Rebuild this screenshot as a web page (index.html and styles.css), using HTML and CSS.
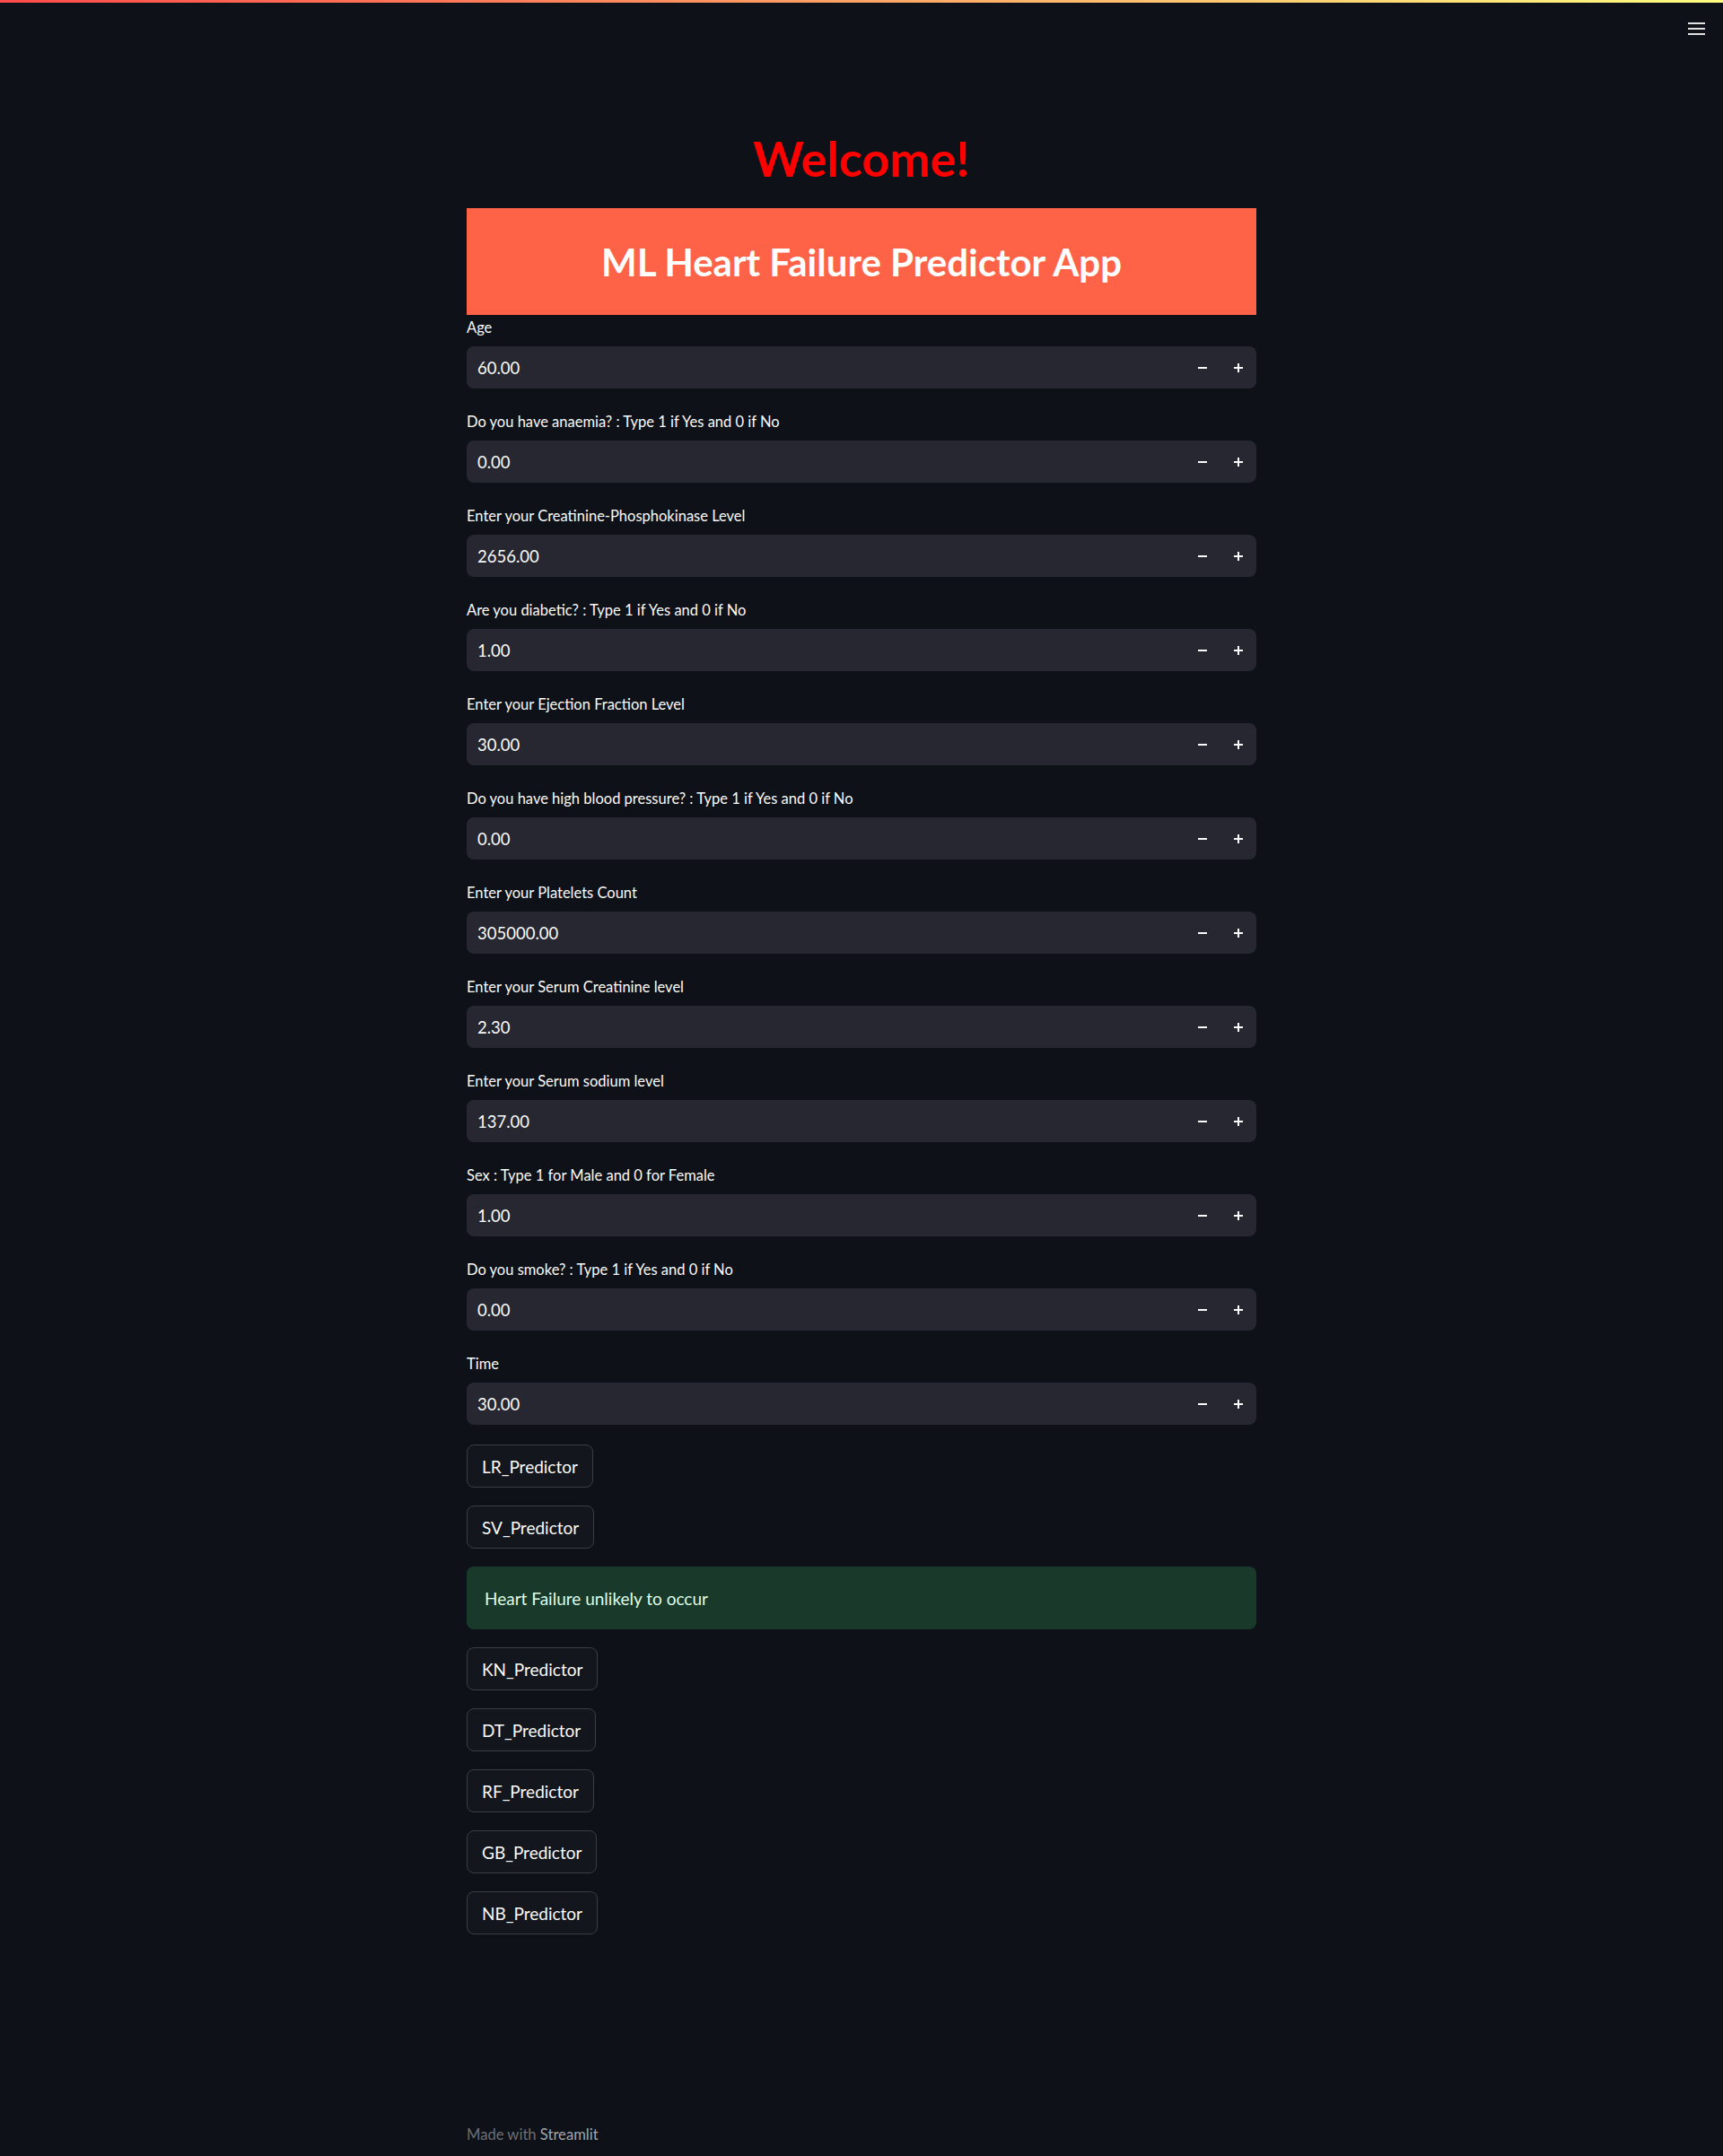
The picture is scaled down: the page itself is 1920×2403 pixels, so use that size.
FILE: index.html
```html
<!DOCTYPE html>
<html lang="en">
<head>
<meta charset="utf-8">
<title>ML Heart Failure Predictor App</title>
<link rel="stylesheet" href="styles.css">
</head>
<body>
<div class="topbar"></div>
<header class="toolbar">
  <button class="menu" aria-label="Main menu">
    <span></span><span></span><span></span>
  </button>
</header>
<main class="main">
  <h1 class="welcome">Welcome!</h1>
  <div class="banner"><h2>ML Heart Failure Predictor App</h2></div>
  <div class="form">
    <div class="field"><label>Age</label><div class="num"><span class="val">60.00</span><span class="step minus"></span><span class="step plus"></span></div></div>
    <div class="field"><label>Do you have anaemia? : Type 1 if Yes and 0 if No</label><div class="num"><span class="val">0.00</span><span class="step minus"></span><span class="step plus"></span></div></div>
    <div class="field"><label>Enter your Creatinine-Phosphokinase Level</label><div class="num"><span class="val">2656.00</span><span class="step minus"></span><span class="step plus"></span></div></div>
    <div class="field"><label>Are you diabetic? : Type 1 if Yes and 0 if No</label><div class="num"><span class="val">1.00</span><span class="step minus"></span><span class="step plus"></span></div></div>
    <div class="field"><label>Enter your Ejection Fraction Level</label><div class="num"><span class="val">30.00</span><span class="step minus"></span><span class="step plus"></span></div></div>
    <div class="field"><label>Do you have high blood pressure? : Type 1 if Yes and 0 if No</label><div class="num"><span class="val">0.00</span><span class="step minus"></span><span class="step plus"></span></div></div>
    <div class="field"><label>Enter your Platelets Count</label><div class="num"><span class="val">305000.00</span><span class="step minus"></span><span class="step plus"></span></div></div>
    <div class="field"><label>Enter your Serum Creatinine level</label><div class="num"><span class="val">2.30</span><span class="step minus"></span><span class="step plus"></span></div></div>
    <div class="field"><label>Enter your Serum sodium level</label><div class="num"><span class="val">137.00</span><span class="step minus"></span><span class="step plus"></span></div></div>
    <div class="field"><label>Sex : Type 1 for Male and 0 for Female</label><div class="num"><span class="val">1.00</span><span class="step minus"></span><span class="step plus"></span></div></div>
    <div class="field"><label>Do you smoke? : Type 1 if Yes and 0 if No</label><div class="num"><span class="val">0.00</span><span class="step minus"></span><span class="step plus"></span></div></div>
    <div class="field"><label>Time</label><div class="num"><span class="val">30.00</span><span class="step minus"></span><span class="step plus"></span></div></div>
    <div class="btnrow first"><button class="btn">LR_Predictor</button></div>
    <div class="btnrow"><button class="btn">SV_Predictor</button></div>
    <div class="success">Heart Failure unlikely to occur</div>
    <div class="btnrow"><button class="btn">KN_Predictor</button></div>
    <div class="btnrow"><button class="btn">DT_Predictor</button></div>
    <div class="btnrow"><button class="btn">RF_Predictor</button></div>
    <div class="btnrow"><button class="btn">GB_Predictor</button></div>
    <div class="btnrow"><button class="btn">NB_Predictor</button></div>
  </div>
</main>
<footer class="footer">Made with <span class="brand">Streamlit</span></footer>
</body>
</html>
```

FILE: styles.css
```css
html, body {
  margin: 0;
  padding: 0;
  background: #0e1117;
  color: #fafafa;
  font-family: Lato, "Noto Sans", "DejaVu Sans", sans-serif;
}
body {
  min-height: 2403px;
  display: flex;
  flex-direction: column;
}
.topbar {
  height: 3px;
  background: linear-gradient(90deg, #ff4b4b, #fffd80);
}
.toolbar {
  display: flex;
  justify-content: flex-end;
  padding: 22px 20px 0 0;
  height: 20px;
}
.menu {
  width: 19px;
  height: 14px;
  padding: 0;
  border: 0;
  background: transparent;
  display: flex;
  flex-direction: column;
  justify-content: space-between;
}
.menu span {
  display: block;
  height: 2px;
  background: #e0e0e0;
}
.main {
  width: 880px;
  margin: 0 auto;
  flex: 1;
}
.welcome {
  margin: 102px 0 0;
  text-align: center;
  color: #ff0000;
  font-size: 54px;
  line-height: 60px;
  font-weight: 700;
}
.banner {
  margin-top: 25px;
  background: #ff6347;
  height: 119px;
  display: flex;
  align-items: center;
  justify-content: center;
}
.banner h2 {
  margin: 0;
  color: #ffffff;
  font-size: 42px;
  font-weight: 700;
  line-height: 1;
}
.form {
  display: flex;
  flex-direction: column;
  gap: 20px;
  margin-top: -3px;
}
.field {
  display: flex;
  flex-direction: column;
}
.field label {
  height: 38px;
  box-sizing: border-box;
  display: flex;
  align-items: flex-end;
  padding-bottom: 10px;
  font-size: 16.5px;
  line-height: 21px;
  color: #fafafa;
}
.num {
  height: 47px;
  background: #262730;
  border-radius: 8px;
  display: flex;
  align-items: center;
  padding: 0 15px 0 12px;
}
.val {
  flex: 1;
  font-size: 18.5px;
  color: #fafafa;
}
.step {
  width: 10px;
  height: 10px;
  position: relative;
  margin-left: 30px;
}
.step::before {
  content: "";
  position: absolute;
  left: 0;
  top: 4px;
  width: 10px;
  height: 2px;
  background: #fafafa;
}
.plus::after {
  content: "";
  position: absolute;
  left: 4px;
  top: 0;
  width: 2px;
  height: 10px;
  background: #fafafa;
}
.btnrow {
  display: flex;
}
.btnrow.first {
  margin-top: 2px;
}
.btn {
  height: 48px;
  padding: 0 16px;
  background: #13161d;
  border: 1px solid #3b3d45;
  border-radius: 8px;
  color: #fafafa;
  font-family: inherit;
  font-size: 19px;
}
.success {
  height: 70px;
  display: flex;
  align-items: center;
  padding: 0 20px;
  background: #193a2a;
  border-radius: 8px;
  color: #dffde9;
  font-size: 19px;
}
.footer {
  width: 880px;
  margin: 0 auto;
  padding-bottom: 14px;
  font-size: 16.6px;
  color: #6d6f75;
}
.brand {
  color: #a3a5aa;
}
```
